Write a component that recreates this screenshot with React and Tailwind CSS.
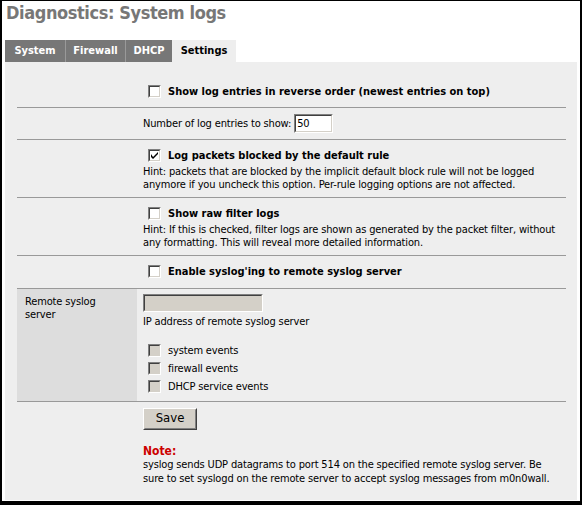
import React from 'react';

const font = { fontFamily: '"DejaVu Sans Condensed", "DejaVu Sans", sans-serif' };

const Box = ({ checked, disabled }) => (
  <span
    className={`inline-block w-[13px] h-[13px] border border-t-[#808080] border-l-[#808080] border-r-white border-b-white relative ${
      disabled ? 'bg-[#d4d0c8]' : 'bg-white'
    }`}
  >
    <span className="absolute inset-0 border border-t-[#404040] border-l-[#404040] border-r-[#d4d0c8] border-b-[#d4d0c8]" />
    {checked && (
      <svg className="absolute left-[2px] top-[2px]" width="7" height="7" viewBox="0 0 7 7">
        <path d="M0 2v3l2 2 5-5V0L2 5z" fill="#000" />
      </svg>
    )}
  </span>
);

const Row = ({ label, dark, children, className = '' }) => (
  <div className="flex border-b border-[#999]">
    <div className={`w-[120px] shrink-0 pl-[8px] pt-[6px] ${dark ? 'bg-[#dddddd]' : ''}`}>{label}</div>
    <div className={`flex-1 pl-[6px] ${className}`}>{children}</div>
  </div>
);

const Check = ({ checked, children }) => (
  <div className="flex items-center h-[19px]">
    <span className="ml-[5px] mr-[7px] flex"><Box checked={checked} /></span>
    <span className="font-bold tracking-normal">{children}</span>
  </div>
);

export default function App() {
  return (
    <div
      className="w-[582px] h-[505px] border-l-2 border-r-2 border-t border-b-4 border-black bg-white text-[11px] leading-[13px] text-black tracking-[-0.15px]"
      style={font}
    >
      <h1 className="text-[18px] leading-[22px] font-bold text-[#777777] pl-[4px] pt-[1px] tracking-[-0.4px]">Diagnostics: System logs</h1>
      <div className="flex mt-[16px] ml-[3px] h-[22px] font-bold tracking-normal">
        <div className="w-[61px] text-center bg-[#777777] text-white leading-[22px] border-r border-[#999]">System</div>
        <div className="w-[60px] text-center bg-[#777777] text-white leading-[22px] border-r border-[#999]">Firewall</div>
        <div className="w-[46px] text-center bg-[#777777] text-white leading-[22px]">DHCP</div>
        <div className="w-[64px] text-center bg-[#eeeeee] text-black leading-[22px]">Settings</div>
      </div>
      <div className="bg-[#eeeeee] mx-[3px] h-[438px] pt-[14px] pl-[12px] pr-[11px]">
        <Row className="py-[6px]">
          <Check>Show log entries in reverse order (newest entries on top)</Check>
        </Row>
        <Row className="py-[6px]">
          <div className="flex items-center h-[19px]">
            <span className="mr-[3px]">Number of log entries to show:</span>
            <span className="w-[39px] h-[19px] bg-white border border-t-[#808080] border-l-[#808080] border-r-white border-b-white">
              <span className="block h-full border border-t-[#404040] border-l-[#404040] border-r-[#d4d0c8] border-b-[#d4d0c8] pl-[1px] leading-[15px] text-[11px]">50</span>
            </span>
          </div>
        </Row>
        <Row className="pt-[6px] pb-[6px]">
          <Check checked>Log packets blocked by the default rule</Check>
          <div>
            Hint: packets that are blocked by the implicit default block rule will not be logged anymore if you uncheck this option. Per-rule logging options are not affected.
          </div>
        </Row>
        <Row className="pt-[6px] pb-[6px]">
          <Check>Show raw filter logs</Check>
          <div>
            Hint: If this is checked, filter logs are shown as generated by the packet filter, without any formatting. This will reveal more detailed information.
          </div>
        </Row>
        <Row className="pt-[6px] pb-[7px]">
          <Check>Enable syslog'ing to remote syslog server</Check>
        </Row>
        <Row
          dark
          label={<div className="w-[80px]">Remote syslog server</div>}
          className="pt-[5px] pb-[6px]"
        >
          <span className="block w-[120px] h-[18px] bg-[#d4d0c8] border border-t-[#808080] border-l-[#808080] border-r-white border-b-white">
            <span className="block h-full border border-t-[#404040] border-l-[#404040] border-r-[#d4d0c8] border-b-[#d4d0c8]" />
          </span>
          <div className="mt-[3px]">IP address of remote syslog server</div>
          <div className="h-[13px]" />
          {['system events', 'firewall events', 'DHCP service events'].map((t) => (
            <div key={t} className="flex items-center h-[18px]">
              <span className="ml-[5px] mr-[7px] flex"><Box disabled /></span>
              <span>{t}</span>
            </div>
          ))}
        </Row>
        <div className="flex">
          <div className="w-[120px] shrink-0" />
          <div className="flex-1 pl-[6px] pt-[6px]">
            <button className="w-[54px] h-[22px] bg-[#d4d0c8] text-[13px] leading-[16px] tracking-normal border border-t-white border-l-white border-r-[#404040] border-b-[#404040]">
              <span className="block h-full border border-t-[#d4d0c8] border-l-[#d4d0c8] border-r-[#808080] border-b-[#808080]">Save</span>
            </button>
            <div className="mt-[15px] font-bold text-[#cc0000] text-[12px] tracking-normal">Note:</div>
            <div className="leading-[14px] w-[412px]">
              syslog sends UDP datagrams to port 514 on the specified remote syslog server. Be sure to set syslogd on the remote server to accept syslog messages from m0n0wall.
            </div>
          </div>
        </div>
      </div>
    </div>
  );
}
